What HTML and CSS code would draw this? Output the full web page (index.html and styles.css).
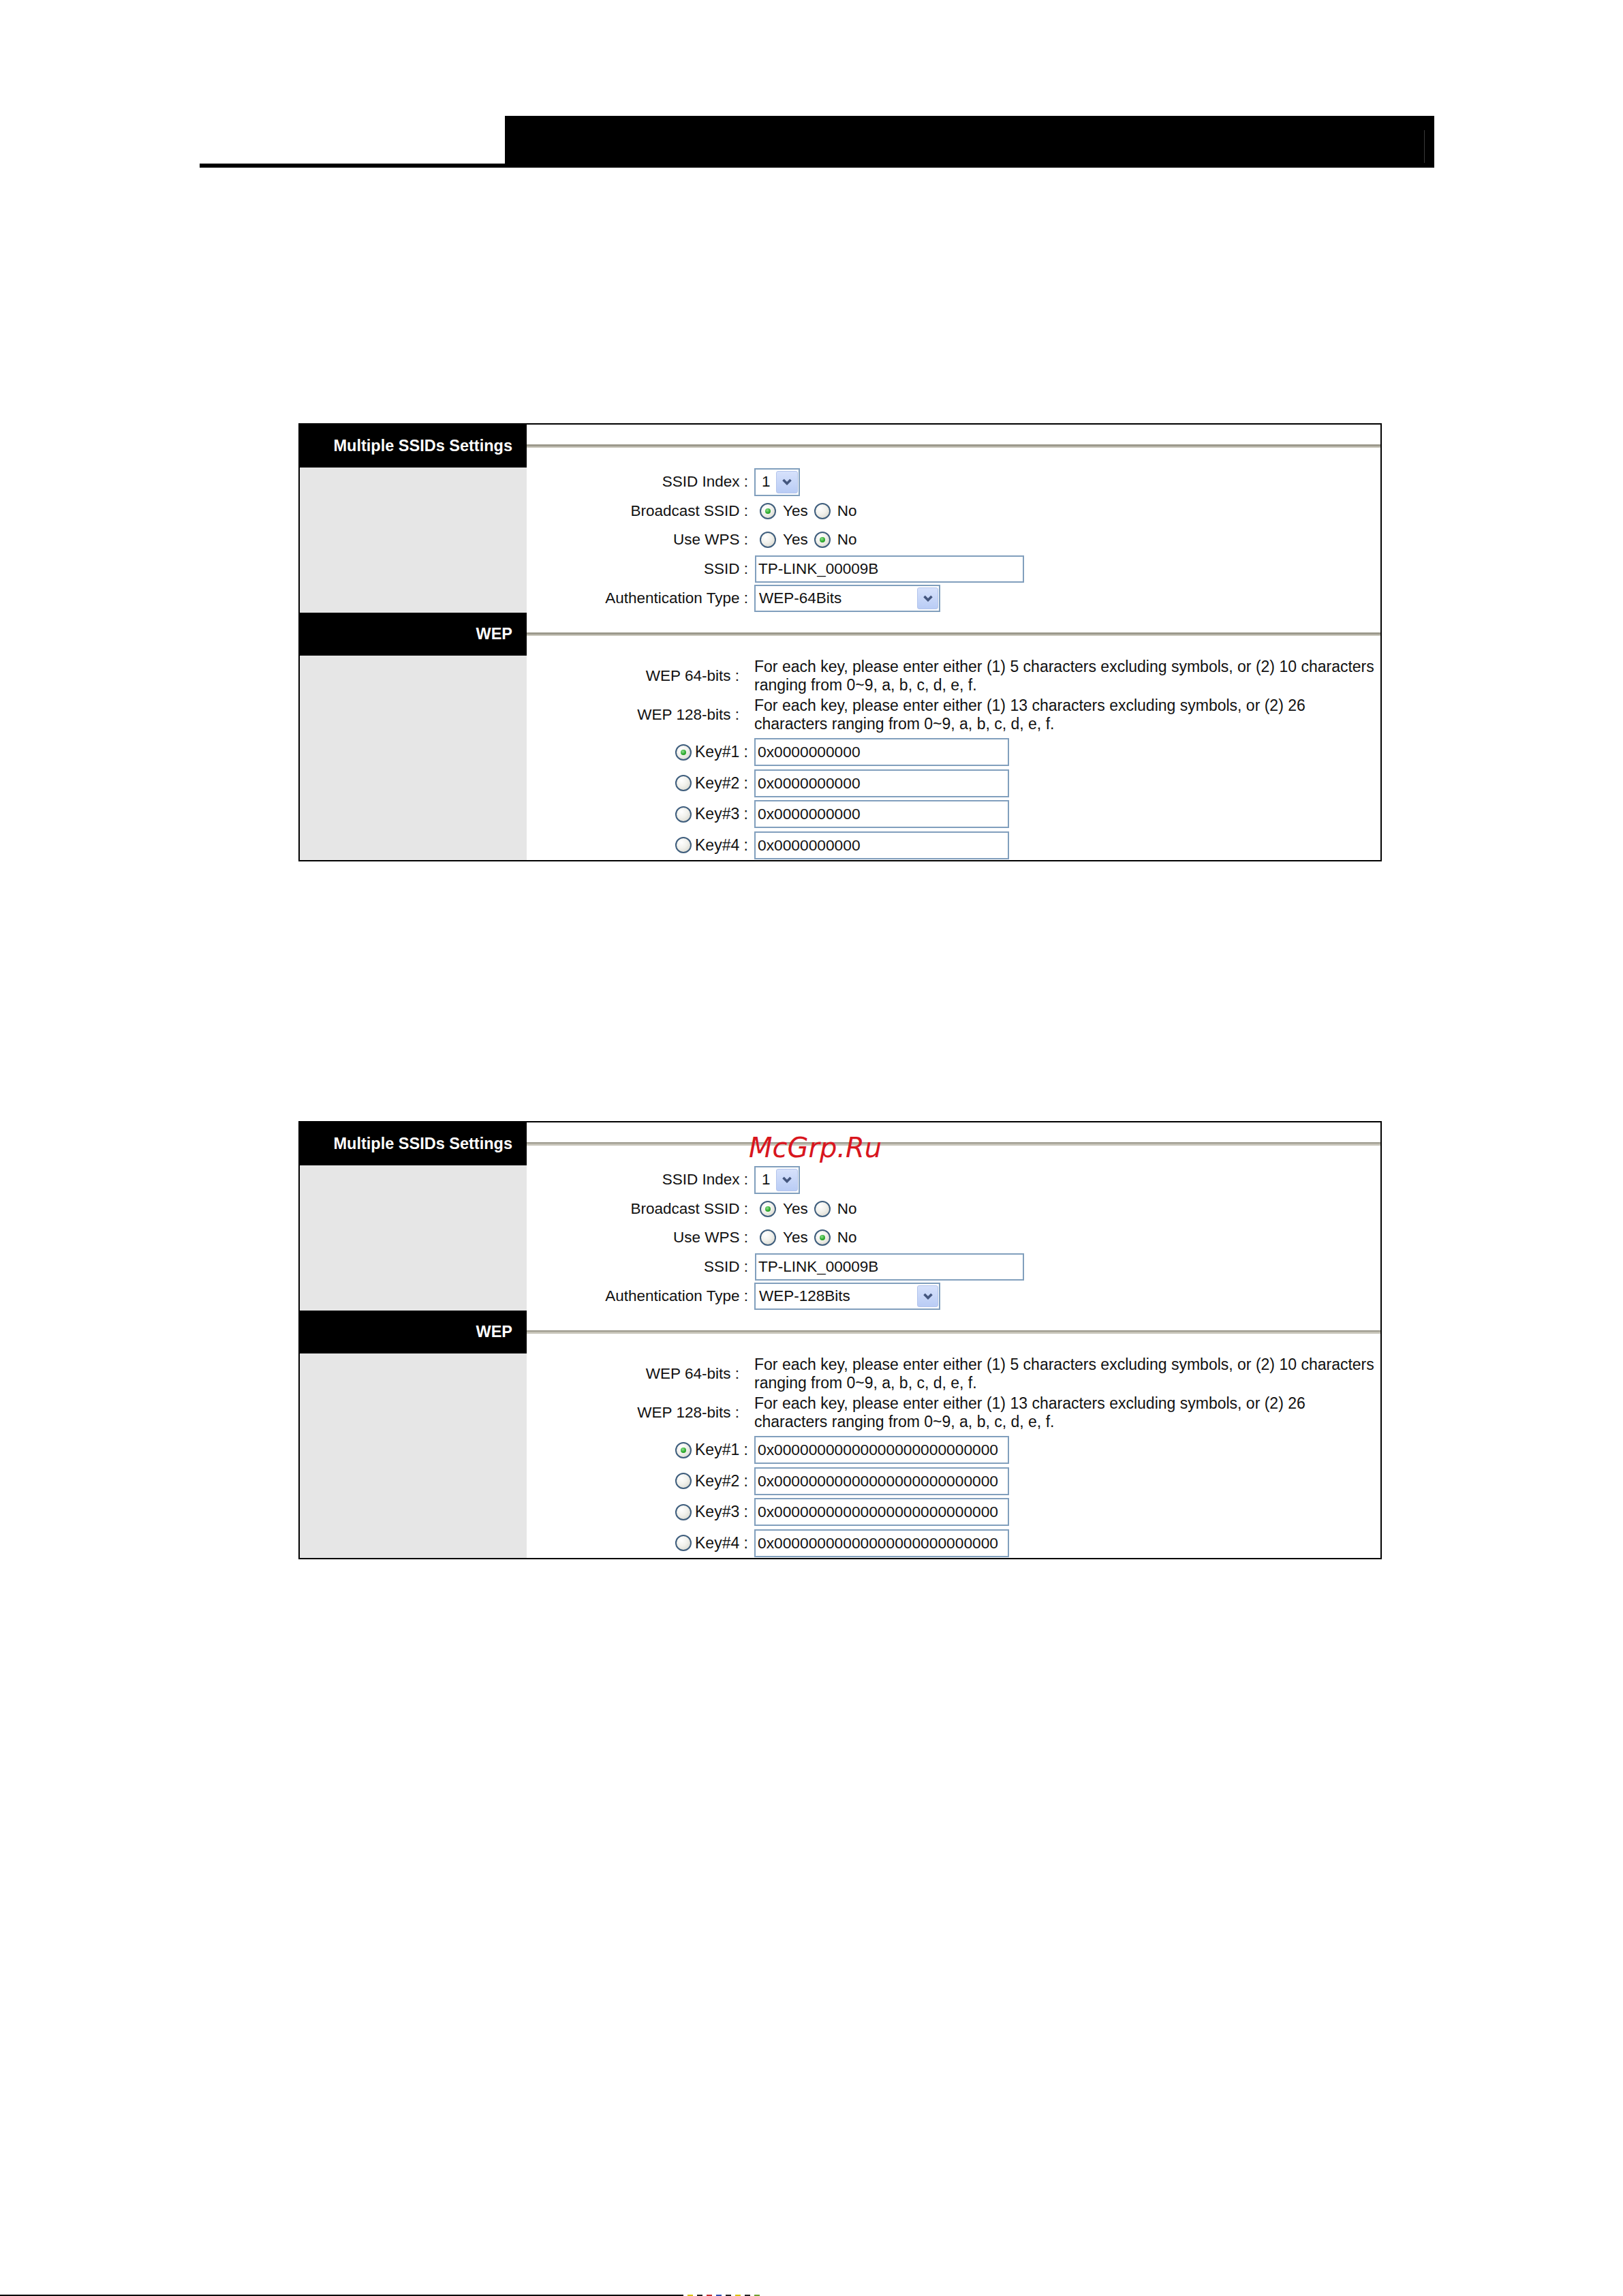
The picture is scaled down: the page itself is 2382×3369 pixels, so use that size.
FILE: index.html
```html
<!DOCTYPE html>
<html>
<head>
<meta charset="utf-8">
<title>Multiple SSIDs Settings</title>
<link rel="stylesheet" href="styles.css">
</head>
<body>
<div class="page">
  <div class="doc-header">
    <div class="doc-rule"></div>
    <div class="doc-bar"><div class="doc-bar-mark"></div></div>
  </div>

  <section class="panel panel-first">
    <div class="sec-title">Multiple SSIDs Settings</div>
    <div class="sec-rule"><div class="rule-line"></div></div>
    <div class="side"></div>
    <div class="form form-basic">
      <div class="label">SSID Index :</div>
      <div class="ctrl">
        <div class="select select-index"><span class="select-value">1</span><span class="select-btn"><svg viewBox="0 0 16 10" class="chev"><path d="M2.5 2 L8 7.5 L13.5 2"/></svg></span></div>
      </div>
      <div class="label">Broadcast SSID :</div>
      <div class="ctrl"><span class="radio on"></span><span class="opt">Yes</span><span class="radio"></span><span class="opt">No</span></div>
      <div class="label">Use WPS :</div>
      <div class="ctrl"><span class="radio"></span><span class="opt">Yes</span><span class="radio on"></span><span class="opt">No</span></div>
      <div class="label">SSID :</div>
      <div class="ctrl"><input class="field field-ssid" type="text" value="TP-LINK_00009B" readonly></div>
      <div class="label">Authentication Type :</div>
      <div class="ctrl">
        <div class="select select-auth"><span class="select-value">WEP-64Bits</span><span class="select-btn"><svg viewBox="0 0 16 10" class="chev"><path d="M2.5 2 L8 7.5 L13.5 2"/></svg></span></div>
      </div>
    </div>
    <div class="sec-title">WEP</div>
    <div class="sec-rule"><div class="rule-line"></div></div>
    <div class="side"></div>
    <div class="form form-wep">
      <div class="desc-rows">
        <div class="label label-desc">WEP 64-bits :</div>
        <div class="desc">For each key, please enter either (1) 5 characters excluding symbols, or (2) 10 characters<br>ranging from 0~9, a, b, c, d, e, f.</div>
        <div class="label label-desc">WEP 128-bits :</div>
        <div class="desc">For each key, please enter either (1) 13 characters excluding symbols, or (2) 26<br>characters ranging from 0~9, a, b, c, d, e, f.</div>
      </div>
      <div class="key-rows">
        <div class="label label-key"><span class="radio on"></span><span>Key#1 :</span></div>
        <div class="ctrl"><input class="field field-key" type="text" value="0x0000000000" readonly></div>
        <div class="label label-key"><span class="radio"></span><span>Key#2 :</span></div>
        <div class="ctrl"><input class="field field-key" type="text" value="0x0000000000" readonly></div>
        <div class="label label-key"><span class="radio"></span><span>Key#3 :</span></div>
        <div class="ctrl"><input class="field field-key" type="text" value="0x0000000000" readonly></div>
        <div class="label label-key"><span class="radio"></span><span>Key#4 :</span></div>
        <div class="ctrl"><input class="field field-key" type="text" value="0x0000000000" readonly></div>
      </div>
    </div>
  </section>

  <section class="panel panel-second">
    <div class="sec-title">Multiple SSIDs Settings</div>
    <div class="sec-rule"><div class="rule-line"></div></div>
    <div class="side"></div>
    <div class="form form-basic">
      <div class="label">SSID Index :</div>
      <div class="ctrl">
        <div class="select select-index"><span class="select-value">1</span><span class="select-btn"><svg viewBox="0 0 16 10" class="chev"><path d="M2.5 2 L8 7.5 L13.5 2"/></svg></span></div>
      </div>
      <div class="label">Broadcast SSID :</div>
      <div class="ctrl"><span class="radio on"></span><span class="opt">Yes</span><span class="radio"></span><span class="opt">No</span></div>
      <div class="label">Use WPS :</div>
      <div class="ctrl"><span class="radio"></span><span class="opt">Yes</span><span class="radio on"></span><span class="opt">No</span></div>
      <div class="label">SSID :</div>
      <div class="ctrl"><input class="field field-ssid" type="text" value="TP-LINK_00009B" readonly></div>
      <div class="label">Authentication Type :</div>
      <div class="ctrl">
        <div class="select select-auth"><span class="select-value">WEP-128Bits</span><span class="select-btn"><svg viewBox="0 0 16 10" class="chev"><path d="M2.5 2 L8 7.5 L13.5 2"/></svg></span></div>
      </div>
    </div>
    <div class="sec-title">WEP</div>
    <div class="sec-rule"><div class="rule-line"></div></div>
    <div class="side"></div>
    <div class="form form-wep">
      <div class="desc-rows">
        <div class="label label-desc">WEP 64-bits :</div>
        <div class="desc">For each key, please enter either (1) 5 characters excluding symbols, or (2) 10 characters<br>ranging from 0~9, a, b, c, d, e, f.</div>
        <div class="label label-desc">WEP 128-bits :</div>
        <div class="desc">For each key, please enter either (1) 13 characters excluding symbols, or (2) 26<br>characters ranging from 0~9, a, b, c, d, e, f.</div>
      </div>
      <div class="key-rows">
        <div class="label label-key"><span class="radio on"></span><span>Key#1 :</span></div>
        <div class="ctrl"><input class="field field-key" type="text" value="0x00000000000000000000000000" readonly></div>
        <div class="label label-key"><span class="radio"></span><span>Key#2 :</span></div>
        <div class="ctrl"><input class="field field-key" type="text" value="0x00000000000000000000000000" readonly></div>
        <div class="label label-key"><span class="radio"></span><span>Key#3 :</span></div>
        <div class="ctrl"><input class="field field-key" type="text" value="0x00000000000000000000000000" readonly></div>
        <div class="label label-key"><span class="radio"></span><span>Key#4 :</span></div>
        <div class="ctrl"><input class="field field-key" type="text" value="0x00000000000000000000000000" readonly></div>
      </div>
    </div>
    <div class="watermark">McGrp.Ru</div>
  </section>

  <div class="doc-footer">
    <div class="footer-line"></div>
    <div class="footer-bits">
      <span class="bit bit-y"></span><span class="bit bit-k"></span><span class="bit bit-r"></span><span class="bit bit-b"></span><span class="bit bit-k"></span><span class="bit bit-y"></span><span class="bit bit-k"></span><span class="bit bit-g"></span>
    </div>
  </div>
</div>
</body>
</html>
```

FILE: styles.css
```css
html, body {
  margin: 0;
  padding: 0;
  background: #fff;
}
body {
  width: 2382px;
  height: 3369px;
  overflow: hidden;
  font-family: "Liberation Sans", Arial, sans-serif;
  font-size: 22.5px;
  color: #111;
}
.page {
  padding-top: 170px;
}

/* document header */
.doc-header {
  display: flex;
  align-items: flex-end;
  margin-left: 293px;
}
.doc-rule {
  width: 448px;
  height: 6px;
  background: #000;
}
.doc-bar {
  width: 1364px;
  height: 76px;
  background: #000;
  display: flex;
  justify-content: flex-end;
  align-items: flex-end;
  padding-right: 14px;
  padding-bottom: 7px;
  box-sizing: border-box;
}
.doc-bar-mark {
  width: 1px;
  height: 48px;
  background: #3a3a3a;
}

/* panels */
.panel {
  position: relative;
  margin-left: 438px;
  width: 1590px;
  box-sizing: border-box;
  border: 2px solid #000;
  display: grid;
  grid-template-columns: 333px 1fr;
  grid-template-rows: 63px 213px 63px 300px;
  background: #fff;
}
.panel-first {
  margin-top: 375px;
}
.panel-second {
  margin-top: 381px;
}
.sec-title {
  background: #000;
  color: #fff;
  font-weight: bold;
  font-size: 23.5px;
  display: flex;
  align-items: center;
  justify-content: flex-end;
  padding-right: 21px;
}
.sec-rule {
  display: flex;
  align-items: center;
}
.rule-line {
  width: 100%;
  height: 5px;
  background: linear-gradient(#9c998c 0, #9c998c 50%, #c6c3b8 50%, #c6c3b8 100%);
}
.side {
  background: #e6e6e6;
}

/* forms */
.form-basic {
  display: grid;
  grid-template-columns: 325px 1fr;
  column-gap: 9px;
  grid-auto-rows: 42.6px;
  align-items: center;
}
.label {
  text-align: right;
  white-space: nowrap;
}
.ctrl {
  display: flex;
  align-items: center;
}
.desc-rows,
.key-rows {
  display: grid;
  grid-template-columns: 325px 1fr;
  column-gap: 9px;
  align-items: center;
}
.desc-rows {
  margin-top: 1px;
  grid-auto-rows: 57px;
}
.key-rows {
  margin-top: 4px;
  grid-auto-rows: 45.5px;
}
.label-desc {
  padding-right: 13px;
}
.desc {
  font-size: 23px;
  line-height: 27px;
  white-space: nowrap;
}
.label-key {
  display: flex;
  justify-content: flex-end;
  align-items: center;
  gap: 5px;
  font-size: 23px;
}

/* select */
.select {
  display: flex;
  align-items: center;
  justify-content: space-between;
  box-sizing: border-box;
  height: 41px;
  border: 2px solid #819fbd;
  background: #fff;
  padding: 0 1px 0 9px;
}
.select-index {
  width: 67px;
}
.select-auth {
  width: 273px;
  height: 40px;
  padding-left: 5px;
}
.select-btn {
  box-sizing: border-box;
  width: 32px;
  height: 33px;
  border: 1px solid #b4c5ec;
  border-radius: 3px;
  background: linear-gradient(#d6e1fb, #b9ccf5);
  display: flex;
  align-items: center;
  justify-content: center;
}
.select-auth .select-btn {
  width: 31px;
  height: 32px;
}
.chev {
  width: 16px;
  height: 10px;
  fill: none;
  stroke: #44567e;
  stroke-width: 3.6;
}

/* radio buttons */
.radio {
  position: relative;
  box-sizing: border-box;
  width: 24px;
  height: 24px;
  border-radius: 50%;
  border: 2px solid #3f5e7d;
  background: radial-gradient(circle at 35% 30%, #ffffff 0, #f1f1ec 45%, #d2d1c7 100%);
  flex: none;
}
.radio.on::after {
  content: "";
  position: absolute;
  left: 6px;
  top: 6px;
  width: 8px;
  height: 8px;
  border-radius: 50%;
  background: radial-gradient(circle at 40% 35%, #8fe08f 0, #2eab2e 55%, #1a8a1a 100%);
}
.form-basic .ctrl .radio:first-child {
  margin-left: 8px;
}
.opt {
  margin-left: 10px;
  margin-right: 9px;
}

/* text fields */
.field {
  box-sizing: border-box;
  height: 40px;
  border: 2px solid #819fbd;
  background: #fff;
  padding: 0 3px;
  margin: 0;
  font-family: "Liberation Sans", Arial, sans-serif;
  font-size: 22.5px;
  color: #111;
  outline: none;
}
.field-ssid {
  width: 395px;
  margin-left: 1px;
}
.field-key {
  width: 374px;
  height: 41px;
  font-size: 22.75px;
}

/* watermark */
.watermark {
  position: absolute;
  left: 659px;
  top: 17px;
  font-family: "DejaVu Sans", sans-serif;
  font-style: oblique;
  font-size: 40px;
  line-height: 1;
  color: #d8161e;
}

/* document footer */
.doc-footer {
  margin-top: 1079px;
  display: flex;
  align-items: flex-end;
  height: 3px;
}
.footer-line {
  width: 1003px;
  height: 3px;
  background: #000;
}
.footer-bits {
  display: flex;
  gap: 6px;
  margin-left: 6px;
}
.bit {
  width: 8px;
  height: 3px;
}
.bit-y { background: #d8c100; }
.bit-k { background: #222; }
.bit-r { background: #c23030; }
.bit-b { background: #3050b0; }
.bit-g { background: #70a030; }
```
